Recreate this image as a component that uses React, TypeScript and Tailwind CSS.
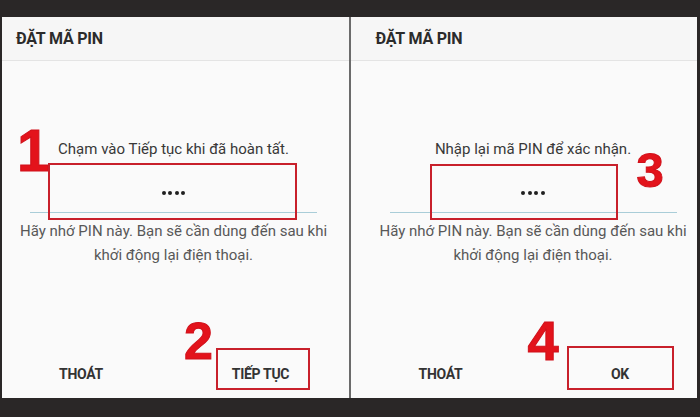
import React from "react";

type PanelProps = {
  padLeft: string;
  prompt: string;
  confirm: string;
  children?: React.ReactNode;
};

function PinDots() {
  return (
    <div className="flex items-center gap-[2.5px]">
      <span className="w-[4px] h-[4px] rounded-full bg-[#1f1f1f]" />
      <span className="w-[4px] h-[4px] rounded-full bg-[#1f1f1f]" />
      <span className="w-[4px] h-[4px] rounded-full bg-[#1f1f1f]" />
      <span className="w-[4px] h-[4px] rounded-full bg-[#1f1f1f]" />
    </div>
  );
}

function PinPanel({ padLeft, prompt, confirm, children }: PanelProps) {
  return (
    <div className="relative flex-1 flex flex-col bg-[#fafafa] font-['Roboto',_sans-serif]">
      {/* Header */}
      <div className={`h-[44px] flex items-center border-b border-[#e4e4e4] bg-[#f6f6f6] ${padLeft}`}>
        <span className="text-[16px] font-bold text-[#2b2b2b] tracking-[-0.2px]">ĐẶT MÃ PIN</span>
      </div>

      {/* Body */}
      <div className={`flex-1 flex flex-col ${padLeft}`}>
        <div className="w-[315px] flex flex-col flex-1">
          <p className="mt-[78px] text-center text-[15px] leading-[20px] text-[#383838]">{prompt}</p>
          <div className="mt-[3px] h-[51px] pt-[12px] flex items-center justify-center border-b-[1.5px] border-[#a9cdd8] mx-[14px]">
            <PinDots />
          </div>
          <p className="mt-[6px] text-center text-[15px] leading-[24px] text-[#585858]">
            Hãy nhớ PIN này. Bạn sẽ cần dùng đến sau khi
            <br />
            khởi động lại điện thoại.
          </p>
          <div className="mt-auto h-[48px] flex items-center">
            <button type="button" className="w-[130px] text-center text-[14px] font-bold text-[#333] tracking-[-0.3px]">
              THOÁT
            </button>
            <button type="button" className="ml-auto w-[141px] text-center text-[14px] font-bold text-[#333] tracking-[-0.3px]">
              {confirm}
            </button>
          </div>
        </div>
      </div>

      {children}
    </div>
  );
}

const stepNum =
  "absolute leading-none font-bold text-[#e3131b] font-['Liberation_Sans',_Arial,_sans-serif] [-webkit-text-stroke:1px_#d0101a]";
const markBox = "absolute border-2 border-[#c8202b]";

export default function App() {
  return (
    <div className="w-[700px] h-[417px] bg-[#2a2727] flex flex-col">
      <div className="h-[17px]" />
      <div className="flex-1 flex pl-[2px] pr-[3px]">
        <PinPanel padLeft="pl-[14px]" prompt="Chạm vào Tiếp tục khi đã hoàn tất." confirm="TIẾP TỤC">
          <span className={`${stepNum} text-[59px] left-[15px] top-[105px]`}>1</span>
          <div className={`${markBox} left-[46px] top-[146px] w-[249px] h-[57px]`} />
          <span className={`${stepNum} text-[52px] left-[182px] top-[298px]`}>2</span>
          <div className={`${markBox} left-[214px] top-[331px] w-[94px] h-[42px]`} />
        </PinPanel>

        <div className="w-[2px] bg-[#6b6b6b]" />

        <PinPanel padLeft="pl-[25px]" prompt="Nhập lại mã PIN để xác nhận." confirm="OK">
          <span className={`${stepNum} text-[49px] left-[286px] top-[129px]`}>3</span>
          <div className={`${markBox} left-[79px] top-[147px] w-[188px] h-[56px]`} />
          <span className={`${stepNum} text-[56px] left-[177px] top-[296px]`}>4</span>
          <div className={`${markBox} left-[216px] top-[329px] w-[107px] h-[44px]`} />
        </PinPanel>
      </div>
      <div className="h-[19px]" />
    </div>
  );
}
